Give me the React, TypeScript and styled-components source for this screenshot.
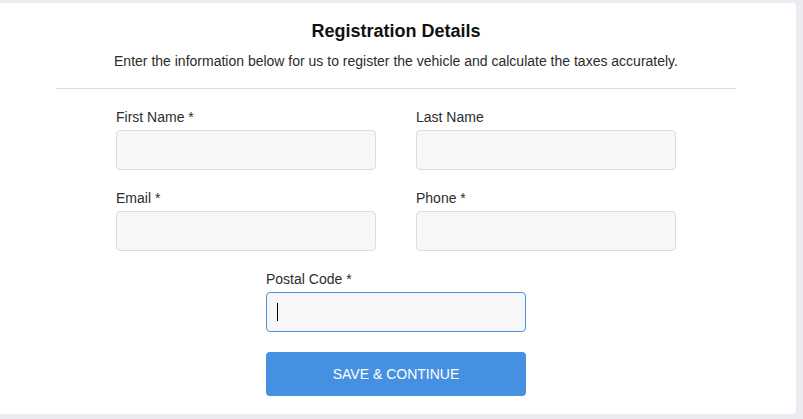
import React from "react";
import styled, { createGlobalStyle } from "styled-components";

const GlobalStyle = createGlobalStyle`
  html, body {
    margin: 0;
    padding: 0;
    background: #ebebf2;
    font-family: "Liberation Sans", Arial, sans-serif;
    overflow: hidden;
  }
  * { box-sizing: border-box; }
`;

const Page = styled.div`
  width: 803px;
  height: 419px;
  padding: 3px 7px 5px 0;
  background: #ebebf2;
  overflow: hidden;
`;

const Card = styled.section`
  margin-left: -4px;
  width: 800px;
  height: 411px;
  background: #ffffff;
  border-radius: 4px;
  padding: 17px 60px 0;
  display: flex;
  flex-direction: column;
  align-items: center;
`;

const Title = styled.h1`
  margin: 0;
  font-size: 18px;
  line-height: 22px;
  font-weight: 700;
  color: #111111;
  text-align: center;
`;

const Subtitle = styled.p`
  margin: 11px 0 0;
  font-size: 14px;
  line-height: 16px;
  color: #2b2b2b;
  text-align: center;
`;

const Divider = styled.hr`
  align-self: stretch;
  margin: 19px 0 20px;
  border: none;
  border-top: 1px solid #dedede;
  height: 0;
`;

const FormGrid = styled.div`
  display: grid;
  grid-template-columns: 260px 260px;
  column-gap: 40px;
  row-gap: 20px;
`;

const Field = styled.div<{ $span?: boolean }>`
  display: flex;
  flex-direction: column;
  width: 260px;
  ${(p) => (p.$span ? "grid-column: 1 / span 2; justify-self: center;" : "")}
`;

const Label = styled.label`
  display: block;
  font-size: 14px;
  line-height: 16px;
  color: #2d2d2d;
  margin-bottom: 5px;
`;

const InputWrap = styled.div`
  position: relative;
  width: 260px;
  height: 40px;
`;

const Input = styled.input<{ $focused?: boolean }>`
  width: 100%;
  height: 40px;
  border: 1px solid ${(p) => (p.$focused ? "#4a90e2" : "#dcdcdc")};
  border-radius: 4px;
  background: #f7f7f7;
  padding: 0 10px;
  font-family: "Liberation Sans", Arial, sans-serif;
  font-size: 14px;
  color: #222;
  outline: none;
`;

const Caret = styled.span`
  position: absolute;
  left: 11px;
  top: 11px;
  width: 1px;
  height: 18px;
  background: #000;
`;

const Button = styled.button`
  margin-top: 20px;
  width: 260px;
  height: 44px;
  border: none;
  border-radius: 4px;
  background: #4590e0;
  color: #ffffff;
  font-family: "Liberation Sans", Arial, sans-serif;
  font-size: 14px;
  text-transform: uppercase;
  cursor: pointer;
`;

type FieldDef = { label: string; focused?: boolean; span?: boolean };

const fields: FieldDef[] = [
  { label: "First Name *" },
  { label: "Last Name" },
  { label: "Email *" },
  { label: "Phone *" },
  { label: "Postal Code *", focused: true, span: true },
];

export default function App() {
  return (
    <>
      <GlobalStyle />
      <Page>
        <Card>
          <Title>Registration Details</Title>
          <Subtitle>
            Enter the information below for us to register the vehicle and calculate the taxes accurately.
          </Subtitle>
          <Divider />
          <FormGrid>
            {fields.map((f) => (
              <Field key={f.label} $span={f.span}>
                <Label>{f.label}</Label>
                <InputWrap>
                  <Input $focused={f.focused} readOnly />
                  {f.focused && <Caret />}
                </InputWrap>
              </Field>
            ))}
          </FormGrid>
          <Button>Save &amp; Continue</Button>
        </Card>
      </Page>
    </>
  );
}
